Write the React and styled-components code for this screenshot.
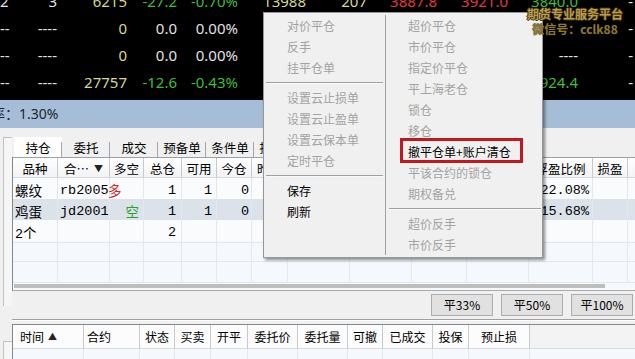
import React from 'react'
import styled, {createGlobalStyle, css} from 'styled-components'

const GlobalStyle = createGlobalStyle`
  html, body {
    margin: 0;
    padding: 0;
    background: #000;
  }
  body {
    font-family: "Noto Sans", "Noto Sans CJK SC", sans-serif;
  }
`

const cjk = `"Noto Sans CJK SC", "Noto Sans", sans-serif`
const mono = `"Liberation Mono", "Noto Sans CJK SC", monospace`

const quoteColors = {
  w: '#e2e2e2',
  y: '#d8d88c',
  g: '#3dbd3d',
  r: '#e23a3a',
}

const Screen = styled.div`
  position: relative;
  width: 635px;
  height: 359px;
  overflow: hidden;
  display: flex;
  flex-direction: column;
  background: #f0f0f0;
`

// ---- quote board (black) ----
const QuoteBoard = styled.div`
  flex: none;
  height: 100px;
  background: #000;
  overflow: hidden;
`

const QuoteList = styled.div`
  margin-top: -12px;
`

const QuoteRow = styled.div`
  display: grid;
  grid-template-columns: 7px 50px 70px 50px 61px 68px 61px 70px 71px 70px 55px;
  height: 27px;
  line-height: 27px;
  font-size: 15px;
  white-space: nowrap;
`

const QuoteCell = styled.span`
  text-align: right;
  color: ${p => quoteColors[p.$c] || quoteColors.w};
`

const Watermark = styled.div`
  position: absolute;
  left: 523px;
  top: 6px;
  width: 104px;
  z-index: 5;
  text-align: center;
  font-family: ${cjk};
  font-weight: bold;
  font-size: 12px;
  line-height: 15px;
  pointer-events: none;
`

const MarkLine = styled.div`
  color: ${p => (p.$dim ? '#8c7934' : '#b99d52')};
  text-shadow: ${p =>
    p.$dim
      ? '0 0 1px #2a2000'
      : '1px 0 0 #3e2e06, -1px 0 0 #3e2e06, 0 1px 0 #3e2e06, 0 -1px 0 #3e2e06'};
`

// ---- rate bar ----
const RateBar = styled.div`
  flex: none;
  height: 28px;
  line-height: 28px;
  background: #a6bdd7;
  color: #1b2330;
  font-size: 14px;
  text-indent: -23px;
  white-space: nowrap;
  overflow: hidden;
`

// ---- workspace ----
const Workspace = styled.div`
  flex: 1;
  min-height: 0;
  display: flex;
`

const SideStrip = styled.div`
  flex: none;
  width: 12px;
  display: flex;
  flex-direction: column;
  padding-top: 9px;
`

const SideFrame = styled.div`
  flex: ${p => (p.$grow ? 1 : 'none')};
  height: ${p => (p.$h ? `${p.$h}px` : 'auto')};
  margin-top: ${p => p.$gap || 0}px;
  margin-left: 3px;
  border-top: 1px solid #c2c2c2;
  border-left: 1px solid #c2c2c2;
  background: #f6f6f6;
`

const Main = styled.div`
  flex: 1;
  min-width: 0;
  display: flex;
  flex-direction: column;
  padding-top: 9px;
`

const TabBar = styled.div`
  flex: none;
  display: flex;
  height: 20px;
  padding-left: 2px;
`

const Tab = styled.div`
  position: relative;
  flex: none;
  width: 48px;
  display: flex;
  align-items: center;
  justify-content: center;
  font-family: ${cjk};
  font-size: 12.5px;
  color: #000;
  background: ${p => (p.$active ? '#fff' : 'transparent')};

  &::after {
    content: '';
    position: absolute;
    right: 0;
    top: 5px;
    bottom: 0;
    width: 1px;
    background: #a4a4a4;
  }
`

const Grid = styled.div`
  flex: none;
  height: 134px;
  box-sizing: border-box;
  border-top: 1px solid #9aa0a8;
  border-left: 1px solid #828790;
  border-bottom: 1px solid #a8a8a8;
  background: #f5f8fc;
  overflow: hidden;
  display: flex;
  flex-direction: column;
`

const GridRow = styled.div`
  flex: none;
  display: grid;
  grid-template-columns: ${p => p.$cols};
  height: ${p => p.$h || 21}px;
  background: ${p => (p.$active ? '#dbe2ea' : p.$filled ? '#fafbfd' : 'transparent')};
`

const HeadCell = styled.div`
  box-sizing: border-box;
  padding: 2px 0 0 ${p => p.$pad || 0}px;
  display: flex;
  align-items: center;
  justify-content: ${p => (p.$align === 'left' ? 'flex-start' : 'center')};
  font-family: ${cjk};
  font-size: ${p => p.$size || 12.5}px;
  color: #000;
  white-space: nowrap;
  overflow: hidden;
  background: linear-gradient(#ffffff, #f2f3f5);
  border-right: 1px solid #c6c9ce;
  border-bottom: 1px solid #d6d9de;
`

const SortArrow = styled.span`
  margin-left: ${p => p.$gap}px;
  font-size: 9px;
  color: #222;
`

const Cell = styled.div`
  box-sizing: border-box;
  padding: 2px ${p => p.$pr ?? 4}px 0 ${p => p.$pl ?? 2}px;
  display: flex;
  align-items: center;
  justify-content: ${p => (p.$align === 'right' ? 'flex-end' : 'flex-start')};
  font-family: ${mono};
  font-size: 13.5px;
  color: ${p => p.$color || '#000'};
  white-space: nowrap;
  border-right: 1px solid #e2e8ee;
  border-bottom: 1px solid #e2e8ee;
  ${p => p.$shift && css`text-indent: ${p.$shift}px;`}
`

const HScroll = styled.div`
  flex: none;
  height: 7px;
  padding: 1px 0 0 1px;
  box-sizing: border-box;
`

const Thumb = styled.div`
  width: 591px;
  height: 4px;
  background: #bebebe;
`

const ButtonBar = styled.div`
  flex: none;
  height: 28px;
  display: flex;
  align-items: center;
  justify-content: flex-end;
  gap: 8px;
  padding-right: 2px;
`

const ActionButton = styled.button`
  width: 62px;
  height: 22px;
  padding: 0;
  border: 1px solid #adadad;
  background: #e1e1e1;
  color: #000;
  font-family: ${cjk};
  font-size: 12px;
  line-height: 20px;
`

const Divider = styled.div`
  flex: none;
  border-top: 1px solid #a0a0a0;
  border-bottom: 1px solid #fff;
`

const OrderGrid = styled.div`
  flex: 1;
  min-height: 0;
  margin-top: 3px;
  border-top: 1px solid #828790;
  border-left: 1px solid #828790;
  background: #f5f8fc;
  overflow: hidden;
`

const OrderHeader = styled.div`
  display: flex;
  height: 24px;
`

const OrderHeadCell = styled(HeadCell)`
  flex: none;
  width: ${p => p.$w}px;
  padding-top: 0;
  background: #fcfcfc;
`

const HeaderFiller = styled.div`
  flex: 1;
  background: #f3f3f3;
  border-bottom: 1px solid #d6d9de;
`

const OrderBody = styled.div`
  display: flex;
  height: 21px;
`

const OrderBodyCell = styled.div`
  flex: none;
  width: ${p => p.$w}px;
  box-sizing: border-box;
  border-right: 1px solid #e2e8ee;
`

// ---- context menu ----
const Menu = styled.div`
  position: absolute;
  left: 263px;
  top: 12px;
  width: 278px;
  z-index: 4;
  display: flex;
  padding: 2px 0;
  background: #f0f0f0;
  border: 1px solid #979797;
  box-shadow: 2px 2px 3px rgba(0, 0, 0, 0.45);
  font-family: ${cjk};
  font-size: 12px;
`

const MenuColumn = styled.div`
  flex: none;
  width: ${p => p.$w}px;
  ${p => p.$split && css`border-left: 1px solid #a0a0a0;`}
`

const MenuItem = styled.div`
  position: relative;
  height: 21px;
  line-height: 21px;
  padding-left: ${p => p.$indent}px;
  color: ${p => (p.$enabled ? '#000' : '#a3a3a3')};
  white-space: nowrap;

  ${p =>
    p.$marked &&
    css`
      &::after {
        content: '';
        position: absolute;
        left: 14px;
        top: -3px;
        width: 123px;
        height: 25px;
        box-sizing: border-box;
        border: 3px solid #c4161d;
      }
    `}
`

const MenuSeparator = styled.div`
  margin: 4px 2px 3px ${p => p.$left}px;
  border-top: 1px solid #a0a0a0;
  border-bottom: 1px solid #fafafa;
`

// ---- data ----
const quotes = [
  [['2'], ['3'], ['6215', 'y'], ['-27.2', 'g'], ['-0.70%', 'g'], ['13988', 'y'], ['207', 'y'], ['3887.8', 'r'], ['3921.0', 'r'], ['3840.0', 'g'], ['-']],
  [['--'], ['----'], ['0', 'y'], ['0.0'], ['0.00%'], ['0', 'y'], ['0', 'y'], ['----'], ['----'], [''], ['-']],
  [['--'], ['----'], ['0', 'y'], ['0.0'], ['0.00%'], ['0', 'y'], ['0', 'y'], ['----'], ['----'], ['----'], ['-']],
  [['--'], ['----'], ['27757', 'y'], ['-12.6', 'g'], ['-0.43%', 'g'], ['52116', 'y'], ['1180', 'y'], ['3925.0', 'g'], ['3936.8', 'r'], ['3924.4', 'g'], ['-']],
]

const tabs = ['持仓', '委托', '成交', '预备单', '条件单', '指令单']

const posCols = [
  {title: '品种', w: 45},
  {title: '合…', w: 52, arrow: '▼'},
  {title: '多空', w: 34},
  {title: '总仓', w: 38},
  {title: '可用', w: 35},
  {title: '今仓', w: 35},
  {title: '昨仓', w: 36},
  {title: '开仓均价', w: 62},
  {title: '持仓均价', w: 62},
  {title: '最新价', w: 55},
  {title: '浮动盈亏', w: 62},
  {title: '浮盈比例', w: 64},
  {title: '损盈', w: 35},
  {title: '止损', w: 60},
]
const posTemplate = posCols.map(c => `${c.w}px`).join(' ')

const positions = [
  {name: '螺纹', code: 'rb2005', side: '多', long: true, nums: ['1', '1', '0', '1', '3462.0', '3462.0', '3537.0', '750.00'], ratio: '22.08%'},
  {name: '鸡蛋', code: 'jd2001', side: '空', long: false, nums: ['1', '1', '0', '1', '3970.0', '3970.0', '3908.0', '620.00'], ratio: '15.68%', active: true},
  {name: '2个', code: '', side: '', nums: ['2', '', '', '', '', '', '', ''], ratio: ''},
]

const orderCols = [
  {title: '时间', w: 71, left: 7, arrow: '▲'},
  {title: '合约', w: 56, left: 3},
  {title: '状态', w: 35},
  {title: '买卖', w: 36},
  {title: '开平', w: 37},
  {title: '委托价', w: 50},
  {title: '委托量', w: 50},
  {title: '可撤', w: 35},
  {title: '已成交', w: 50},
  {title: '投保', w: 36},
  {title: '预止损', w: 61},
]

const menuLeft = [
  '对价平仓', '反手', '挂平仓单', '-',
  '设置云止损单', '设置云止盈单', '设置云保本单', '定时平仓', '-',
  ['保存'], ['刷新'],
]
const menuRight = [
  '超价平仓', '市价平仓', '指定价平仓', '平上海老仓', '锁仓', '移仓',
  ['撤平仓单+账户清仓', 'marked'], '平该合约的锁仓', '期权备兑', '-',
  '超价反手', '市价反手',
]

const numPad = [5, 4, 2, 3, 4, 4, 4, 4]

const PositionRow = ({row}) => (
  <GridRow $cols={posTemplate} $filled $active={row.active}>
    <Cell $pl={2}>{row.name}</Cell>
    <Cell $pl={2}>{row.code}</Cell>
    {row.long ? (
      <Cell $pl={0} $shift={-2} $color="#cc2a2a">{row.side}</Cell>
    ) : (
      <Cell $align="right" $color="#27a327">{row.side}</Cell>
    )}
    {row.nums.map((n, i) => (
      <Cell key={i} $align="right" $pr={numPad[i]}>{n}</Cell>
    ))}
    <Cell $align="right" $pr={3}>{row.ratio}</Cell>
    <Cell />
    <Cell />
  </GridRow>
)

const EmptyRow = () => (
  <GridRow $cols={posTemplate}>
    {posCols.map((c, i) => <Cell key={i} />)}
  </GridRow>
)

const MenuList = ({items, indent, sepLeft}) =>
  items.map((it, i) => {
    if (it === '-') return <MenuSeparator key={i} $left={sepLeft} />
    if (Array.isArray(it)) {
      return (
        <MenuItem key={i} $indent={indent} $enabled $marked={it[1] === 'marked'}>
          {it[0]}
        </MenuItem>
      )
    }
    return <MenuItem key={i} $indent={indent}>{it}</MenuItem>
  })

export default function App() {
  return (
    <Screen>
      <GlobalStyle />
      <QuoteBoard>
        <QuoteList>
          {quotes.map((row, r) => (
            <QuoteRow key={r}>
              {row.map(([v, c], i) => (
                <QuoteCell key={i} $c={c}>{v}</QuoteCell>
              ))}
            </QuoteRow>
          ))}
        </QuoteList>
      </QuoteBoard>

      <RateBar>费率：1.30%</RateBar>

      <Workspace>
        <SideStrip>
          <SideFrame $h={168} />
          <SideFrame $grow $gap={35} />
        </SideStrip>

        <Main>
          <TabBar>
            {tabs.map((t, i) => (
              <Tab key={t} $active={i === 0}>{t}</Tab>
            ))}
          </TabBar>

          <Grid>
            <GridRow $cols={posTemplate} $h={20}>
              {posCols.map(c => (
                <HeadCell key={c.title}>
                  {c.title}
                  {c.arrow && <SortArrow $gap={5}>{c.arrow}</SortArrow>}
                </HeadCell>
              ))}
            </GridRow>
            {positions.map((p, i) => (
              <PositionRow key={i} row={p} />
            ))}
            <EmptyRow />
            <EmptyRow />
            <HScroll>
              <Thumb />
            </HScroll>
          </Grid>

          <ButtonBar>
            <ActionButton>平33%</ActionButton>
            <ActionButton>平50%</ActionButton>
            <ActionButton>平100%</ActionButton>
          </ButtonBar>

          <Divider />

          <OrderGrid>
            <OrderHeader>
              {orderCols.map(c => (
                <OrderHeadCell
                  key={c.title}
                  $w={c.w}
                  $size={12}
                  $align={c.left ? 'left' : 'center'}
                  $pad={c.left}
                >
                  {c.title}
                  {c.arrow && <SortArrow $gap={4}>{c.arrow}</SortArrow>}
                </OrderHeadCell>
              ))}
              <HeaderFiller />
            </OrderHeader>
            <OrderBody>
              {orderCols.map(c => (
                <OrderBodyCell key={c.title} $w={c.w} />
              ))}
            </OrderBody>
          </OrderGrid>
        </Main>
      </Workspace>

      <Menu>
        <MenuColumn $w={121}>
          <MenuList items={menuLeft} indent={23} sepLeft={2} />
        </MenuColumn>
        <MenuColumn $w={157} $split>
          <MenuList items={menuRight} indent={22} sepLeft={3} />
        </MenuColumn>
      </Menu>

      <Watermark>
        <MarkLine>期货专业服务平台</MarkLine>
        <MarkLine $dim>微信号：cclk88</MarkLine>
      </Watermark>
    </Screen>
  )
}
